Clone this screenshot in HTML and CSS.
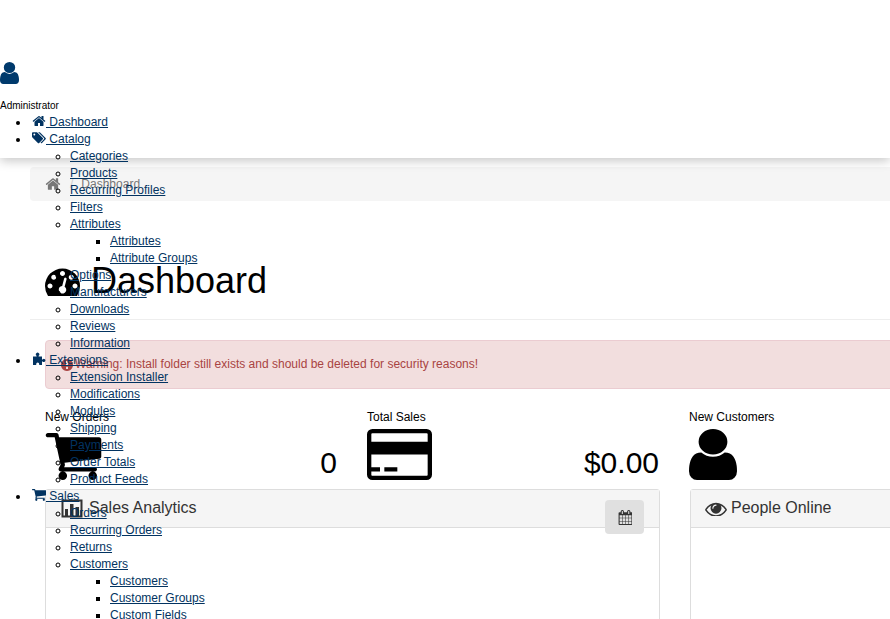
FILE: index.html
```html
<!DOCTYPE html>
<html lang="en">
<head>
<meta charset="UTF-8" />
<title>Dashboard</title>
<link rel="stylesheet" href="styles.css">
</head>
<body>

<svg class="sprite" xmlns="http://www.w3.org/2000/svg">
<symbol id="i-home" viewBox="0 0 1792 1792"><path d="M1472 992v480q0 26-19 45t-45 19h-384v-384h-256v384h-384q-26 0-45-19t-19-45v-480q0-1 .5-3t.5-3l575-474 575 474q1 2 1 6zm223-69l-62 74q-8 9-21 11h-3q-13 0-21-7l-692-577-692 577q-12 8-24 7-13-2-21-11l-62-74q-8-10-7-23.5t11-21.5l719-599q32-26 76-26t76 26l244 204v-195q0-14 9-23t23-9h192q14 0 23 9t9 23v408l219 182q10 8 11 21.5t-7 23.5z"/></symbol>
<symbol id="i-cart" viewBox="64 256 1664 1408"><path d="M704 1536q0 52-38 90t-90 38-90-38-38-90 38-90 90-38 90 38 38 90zm896 0q0 52-38 90t-90 38-90-38-38-90 38-90 90-38 90 38 38 90zm128-1088v512q0 24-16.5 42.5t-40.5 21.5l-1044 122q13 60 13 70 0 16-24 64h920q26 0 45 19t19 45-19 45-45 19h-1024q-26 0-45-19t-19-45q0-11 8-31.5t16-36 21.5-40 15.5-29.5l-177-823h-204q-26 0-45-19t-19-45 19-45 45-19h256q16 0 28.5 6.5t19.5 15.5 13 24.5 8 26 5.5 29.5 4.5 26h1201q26 0 45 19t19 45z"/></symbol>
<symbol id="i-user" viewBox="256 128 1280 1536" preserveAspectRatio="none"><path d="M1536 1399q0 109-62.5 187t-150.5 78h-854q-88 0-150.5-78t-62.5-187q0-85 8.5-160.5t31.5-152 58.5-131 94-89 134.5-34.5q131 128 313 128t313-128q76 0 134.5 34.5t94 89 58.5 131 31.5 152 8.5 160.5zm-256-887q0 159-112.5 271.5t-271.5 112.5-271.5-112.5-112.5-271.5 112.5-271.5 271.5-112.5 271.5 112.5 112.5 271.5z"/></symbol>
</svg>

<header class="top-header">
<div class="profile">
<svg class="profile-icon"><use href="#i-user"/></svg>
<div class="profile-name">Administrator</div>
</div>

<ul class="menu">
<li><a href="#"><svg class="nav-icon"><use href="#i-home"/></svg> Dashboard</a></li>
<li><a href="#"><svg class="nav-icon" viewBox="0 128 1920 1600"><path d="M448 448q0-53-37.5-90.5t-90.5-37.5-90.5 37.5-37.5 90.5 37.5 90.5 90.5 37.5 90.5-37.5 37.5-90.5zm1067 576q0 53-37 90l-491 492q-39 37-91 37-53 0-90-37l-715-716q-38-37-64.5-101t-26.5-117v-416q0-52 38-90t90-38h416q53 0 117 26.5t102 64.5l715 714q37 39 37 91zm384 0q0 53-37 90l-491 492q-39 37-91 37-36 0-59-14t-53-45l470-470q37-37 37-90 0-52-37-91l-715-714q-38-38-102-64.5t-117-26.5h224q53 0 117 26.5t102 64.5l715 714q37 39 37 91z"/></svg> Catalog</a>
<ul>
<li><a href="#">Categories</a></li>
<li><a href="#">Products</a></li>
<li><a href="#">Recurring Profiles</a></li>
<li><a href="#">Filters</a></li>
<li><a href="#">Attributes</a>
<ul>
<li><a href="#">Attributes</a></li>
<li><a href="#">Attribute Groups</a></li>
</ul>
</li>
<li><a href="#">Options</a></li>
<li><a href="#">Manufacturers</a></li>
<li><a href="#">Downloads</a></li>
<li><a href="#">Reviews</a></li>
<li><a href="#">Information</a></li>
</ul>
</li>
<li><a href="#"><svg class="nav-icon" viewBox="0 0 14 14"><path d="M4.600 4.500V3.700a1.700 1.700 0 1 1 2 0v.8h3.400v2.900h.7a1.500 1.500 0 1 1 0 2h-.7V13H7.200v-1a1.500 1.500 0 1 0-3 0v1H1V4.500z"/></svg> Extensions</a>
<ul>
<li><a href="#">Extension Installer</a></li>
<li><a href="#">Modifications</a></li>
<li><a href="#">Modules</a></li>
<li><a href="#">Shipping</a></li>
<li><a href="#">Payments</a></li>
<li><a href="#">Order Totals</a></li>
<li><a href="#">Product Feeds</a></li>
</ul>
</li>
<li><a href="#"><svg class="nav-icon"><use href="#i-cart"/></svg> Sales</a>
<ul>
<li><a href="#">Orders</a></li>
<li><a href="#">Recurring Orders</a></li>
<li><a href="#">Returns</a></li>
<li><a href="#">Customers</a>
<ul>
<li><a href="#">Customers</a></li>
<li><a href="#">Customer Groups</a></li>
<li><a href="#">Custom Fields</a></li>
</ul>
</li>
</ul>
</li>
</ul>
</header>

<main class="content">
<div class="breadcrumb">
<svg class="crumb-home"><use href="#i-home"/></svg>
<span class="crumb-sep">/</span>
<span>Dashboard</span>
</div>

<div class="page-title">
<svg class="title-icon" viewBox="0 128 1792 1536"><path d="M384 1152q0-53-37.5-90.5t-90.5-37.5-90.5 37.5-37.5 90.5 37.5 90.5 90.5 37.5 90.5-37.5 37.5-90.5zm192-448q0-53-37.5-90.5t-90.5-37.5-90.5 37.5-37.5 90.5 37.5 90.5 90.5 37.5 90.5-37.5 37.5-90.5zm428 481l101-382q6-26-7.5-48.5t-38.5-29.5-48 6.5-30 39.5l-101 382q-60 5-107 43.5t-63 98.5q-20 77 20 146t117 89 146-20 89-117q16-60-6-117t-72-91zm660-33q0-53-37.5-90.5t-90.5-37.5-90.5 37.5-37.5 90.5 37.5 90.5 90.5 37.5 90.5-37.5 37.5-90.5zm-640-640q0-53-37.5-90.5t-90.5-37.5-90.5 37.5-37.5 90.5 37.5 90.5 90.5 37.5 90.5-37.5 37.5-90.5zm448 192q0-53-37.5-90.5t-90.5-37.5-90.5 37.5-37.5 90.5 37.5 90.5 90.5 37.5 90.5-37.5 37.5-90.5zm320 448q0 261-141 483-19 29-54 29h-1402q-35 0-54-29-141-221-141-483 0-182 71-348t191-286 286-191 348-71 348 71 286 191 191 286 71 348z"/></svg>
<h1>Dashboard</h1>
</div>

<div class="inner">
<div class="alert">
<svg class="alert-icon" viewBox="128 128 1536 1536"><path d="M896 128q209 0 385.5 103t279.5 279.5 103 385.5-103 385.5-279.5 279.5-385.5 103-385.5-103-279.5-279.5-103-385.5 103-385.5 279.5-279.5 385.5-103zm128 1247v-190q0-14-9-23.5t-22-9.5h-192q-13 0-23 10t-10 23v190q0 13 10 23t23 10h192q13 0 22-9.5t9-23.5zm-2-344l18-621q0-12-10-18-10-8-24-8h-220q-14 0-24 8-10 6-10 18l17 621q0 10 10 17.5t24 7.5h185q14 0 23.5-7.5t10.5-17.5z"/></svg>
Warning: Install folder still exists and should be deleted for security reasons!
</div>

<div class="stats">
<div class="stat">
<div class="stat-label">New Orders</div>
<div class="stat-row">
<svg class="stat-cart"><use href="#i-cart"/></svg>
<span class="stat-value">0</span>
</div>
</div>
<div class="stat">
<div class="stat-label">Total Sales</div>
<div class="stat-row">
<svg class="stat-card" viewBox="0 128 1920 1536" preserveAspectRatio="none"><path d="M1760 128q66 0 113 47t47 113v1216q0 66-47 113t-113 47h-1600q-66 0-113-47t-47-113v-1216q0-66 47-113t113-47h1600zm-1600 128q-13 0-22.5 9.5t-9.5 22.5v224h1664v-224q0-13-9.5-22.5t-22.5-9.5h-1600zm1600 1280q13 0 22.5-9.5t9.5-22.5v-608h-1664v608q0 13 9.5 22.5t22.5 9.5h1600zm-1632-128v-128h256v128h-256zm384 0v-128h384v128h-384z"/></svg>
<span class="stat-value">$0.00</span>
</div>
</div>
<div class="stat">
<div class="stat-label">New Customers</div>
<div class="stat-row">
<svg class="stat-user"><use href="#i-user"/></svg>
</div>
</div>
</div>

<div class="panels">
<section class="panel">
<div class="panel-heading">
<svg class="panel-chart" viewBox="0 0 24 20"><path class="chart-box" d="M2.500 1.500h19v16h-19z"/><path d="M5 10h3v7H5zM10 5h3.500v12H10zM15.500 8H19v9h-3.500z"/></svg>
<h3>Sales Analytics</h3>
<button class="cal-btn"><svg class="cal-icon" viewBox="0 0 1664 1792"><path d="M192 1664h288v-288h-288v288zm352 0h320v-288h-320v288zm-352-352h288v-320h-288v320zm352 0h320v-320h-320v320zm-352-384h288v-288h-288v288zm736 736h320v-288h-320v288zm-384-736h320v-288h-320v288zm768 736h288v-288h-288v288zm-384-352h320v-320h-320v320zm-352-864v-288q0-13-9.5-22.5t-22.5-9.500h-64q-13 0-22.500 9.500t-9.500 22.500v288q0 13 9.500 22.500t22.500 9.500h64q13 0 22.500-9.500t9.500-22.500zm736 864h288v-320h-288v320zm-384-384h320v-288h-320v288zm384 0h288v-288h-288v288zm32-480v-288q0-13-9.500-22.500t-22.500-9.500h-64q-13 0-22.500 9.500t-9.500 22.500v288q0 13 9.500 22.500t22.500 9.500h64q13 0 22.500-9.500t9.500-22.500zm384-64v1280q0 52-38 90t-90 38h-1408q-52 0-90-38t-38-90v-1280q0-52 38-90t90-38h128v-96q0-66 47-113t113-47h64q66 0 113 47t47 113v96h384v-96q0-66 47-113t113-47h64q66 0 113 47t47 113v96h128q52 0 90 38t38 90z"/></svg></button>
</div>
</section>
<section class="panel">
<div class="panel-heading">
<svg class="panel-eye" viewBox="0 320 1792 1152"><path d="M1664 960q-152-236-381-353 61 104 61 225 0 185-131.500 316.500t-316.500 131.500-316.500-131.500-131.500-316.500q0-121 61-225-229 117-381 353 133 205 333.500 326.500t434.500 121.500 434.500-121.500 333.500-326.500zm-720-384q0-20-14-34t-34-14q-125 0-214.500 89.500t-89.500 214.500q0 20 14 34t34 14 34-14 14-34q0-86 61-147t147-61q20 0 34-14t14-34zm848 384q0 34-20 69-140 230-376.500 368.500t-499.500 138.500-499.500-139-376.500-368q-20-35-20-69t20-69q140-229 376.500-368t499.500-139 499.500 139 376.500 368q20 35 20 69z"/></svg>
<h3>People Online</h3>
</div>
</section>
</div>
</div>
</main>

</body>
</html>
```

FILE: styles.css
```css
* {
box-sizing: border-box;
}

html, body {
height: 100%;
overflow: hidden;
}

body {
margin: 0;
background: #fff;
font-family: "Liberation Sans", Arial, sans-serif;
font-size: 12px;
line-height: 17px;
color: #000;
}

.sprite {
display: none;
}

svg {
fill: currentColor;
}

.top-header {
position: relative;
z-index: 5;
height: 158px;
padding-top: 62px;
background: #fff;
box-shadow: 0 3px 10px rgba(0, 0, 0, 0.22);
}

.profile-icon {
display: block;
width: 19px;
height: 22px;
color: #003a6c;
}

.profile-name {
margin-top: 15px;
font-size: 10px;
line-height: 14px;
}

.menu, .menu ul {
margin: 0;
padding-left: 40px;
}

.menu {
padding-left: 30px;
margin-top: 1px;
}

.menu a {
color: #023361;
text-decoration: underline;
}

.nav-icon {
display: inline-block;
width: 14px;
height: 14px;
margin-left: 2px;
vertical-align: -2px;
}

.content {
width: 1290px;
margin-left: 30px;
padding-top: 9px;
}

.breadcrumb {
display: flex;
align-items: center;
height: 34px;
padding-left: 15px;
background: #f5f5f5;
border-radius: 4px;
color: #777;
}

.crumb-home {
width: 16px;
height: 16px;
}

.crumb-sep {
margin: 0 8px 0 9px;
color: #ccc;
}

.page-title {
display: flex;
align-items: center;
gap: 11px;
margin-top: 59px;
padding: 0 15px 18px;
border-bottom: 1px solid #eee;
}

.title-icon {
width: 35px;
height: 30px;
}

.page-title h1 {
margin: 0;
font-size: 36px;
line-height: 41px;
font-weight: 400;
}

.inner {
padding: 20px 0 0 15px;
}

.alert {
display: flex;
align-items: center;
gap: 2px;
padding: 15px;
background: #f2dede;
border: 1px solid #ebccd1;
border-radius: 4px;
color: #a94442;
}

.alert-icon {
width: 12px;
height: 12px;
}

.stats {
display: grid;
grid-template-columns: repeat(3, 292px);
gap: 30px;
margin-top: 20px;
}

.stat-label {
margin-bottom: 3px;
}

.stat-row {
display: flex;
justify-content: space-between;
align-items: flex-end;
height: 51px;
}

.stat-cart {
width: 57px;
height: 47px;
}

.stat-card {
width: 65px;
height: 51px;
}

.stat-user {
width: 48px;
height: 51px;
}

.stat-value {
font-size: 30px;
line-height: 34px;
}

.panels {
display: grid;
grid-template-columns: 615px 615px;
gap: 30px;
margin-top: 9px;
}

.panel {
min-height: 300px;
border: 1px solid #ddd;
border-radius: 3px;
}

.panel-heading {
display: flex;
align-items: center;
height: 38px;
padding: 0 15px 0 14px;
background: #f5f5f5;
border-bottom: 1px solid #ddd;
color: #333;
}

.panel-heading h3 {
margin: 0 0 1px;
font-size: 16px;
line-height: 20px;
font-weight: 400;
}

.panel-chart {
width: 24px;
height: 20px;
margin-right: 5px;
}

.chart-box {
fill: none;
stroke: currentColor;
stroke-width: 2;
}

.panel-eye {
width: 22px;
height: 14px;
margin-right: 4px;
}

.cal-btn {
display: flex;
align-items: center;
justify-content: center;
align-self: flex-start;
width: 39px;
height: 34px;
margin: 10px 0 0 auto;
padding: 0;
background: #e0e0e0;
border: none;
border-radius: 4px;
color: #333;
}

.cal-icon {
width: 14px;
height: 15px;
}
```
